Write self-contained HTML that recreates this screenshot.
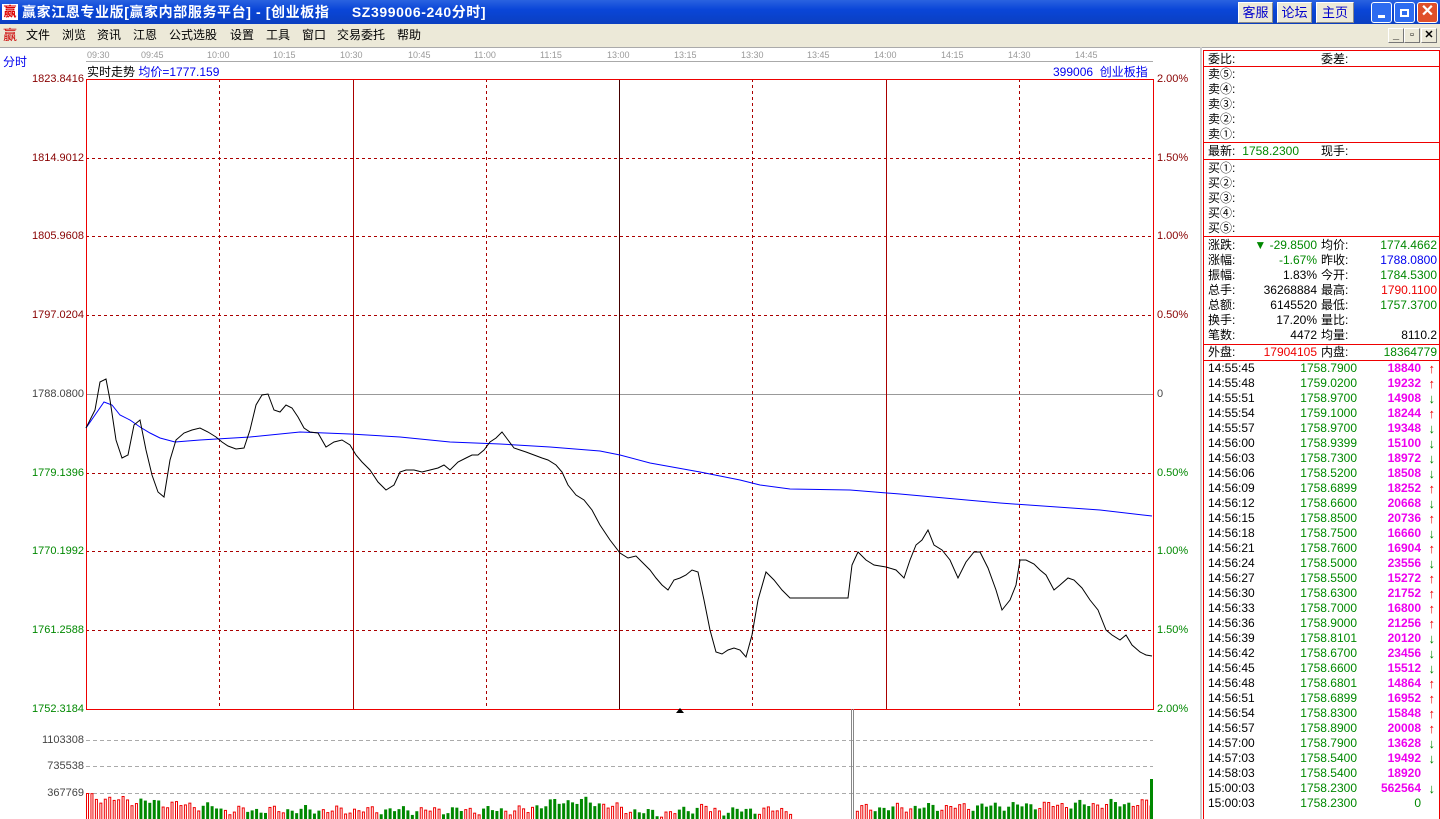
<!DOCTYPE html>
<html><head><meta charset="utf-8"><style>
*{margin:0;padding:0;box-sizing:border-box}
body{width:1440px;height:819px;overflow:hidden;background:#fff;font-family:"Liberation Sans","Noto Sans CJK SC",sans-serif;font-size:12px;position:relative}
.a{position:absolute;white-space:nowrap}
#title{left:0;top:0;width:1440px;height:24px;background:linear-gradient(#2a62e0,#0a46d8 40%,#0b3fc0);color:#fff;font-weight:bold;font-size:14px;line-height:24px}
.tb{top:2px;height:21px;background:#ece9d8;border:1px solid #fff;border-right-color:#888;border-bottom-color:#888;color:#00c;font-size:13px;line-height:19px;text-align:center}
.wb{top:2px;width:21px;height:21px;border:1px solid #fff;border-radius:3px;background:#2d6bf0}
#menu{left:0;top:24px;width:1440px;height:23px;background:#ece9d8;font-size:12px;line-height:23px}
#menu span{position:absolute}
.mb{top:28px;width:16px;height:15px;border:1px solid #fff;border-right-color:#777;border-bottom-color:#777;background:#ece9d8;font-size:11px;text-align:center;line-height:12px;font-weight:bold}
.tm{top:50px;font-size:9px;color:#999}
.pl{font-size:11px;right:1356px;text-align:right}
.pr{font-size:11px;left:1157px}
.rp div{position:absolute;white-space:nowrap;line-height:15px}
.r{text-align:right}
.g{color:#080}.rd{color:#e00}.b{color:#00e}.m{color:#e0e;font-weight:bold}
</style></head><body>
<div class="a" id="title"><span style="position:absolute;left:2px;top:4px;width:16px;height:16px;background:#fff;color:#d00;font-size:13px;line-height:16px;text-align:center">赢</span><span style="position:absolute;left:22px;letter-spacing:0.6px">赢家江恩专业版[赢家内部服务平台] - [创业板指&nbsp;&nbsp;&nbsp;&nbsp; SZ399006-240分时]</span></div>
<div class="a tb" style="left:1238px;width:35px">客服</div>
<div class="a tb" style="left:1277px;width:35px">论坛</div>
<div class="a tb" style="left:1316px;width:38px">主页</div>
<div class="a wb" style="left:1371px"><div style="position:absolute;left:6px;top:12px;width:7px;height:3px;background:#fff"></div></div>
<div class="a wb" style="left:1394px"><div style="position:absolute;left:5px;top:6px;width:9px;height:8px;border:2px solid #fff"></div></div>
<div class="a wb" style="left:1417px;background:#e0502a;color:#fff;font-weight:bold;font-size:16px;line-height:18px;text-align:center">✕</div>
<div class="a" id="menu"><span style="left:3px;color:#c00;font-size:14px">赢</span><span style="left:26px">文件</span><span style="left:62px">浏览</span><span style="left:97px">资讯</span><span style="left:133px">江恩</span><span style="left:169px">公式选股</span><span style="left:230px">设置</span><span style="left:266px">工具</span><span style="left:302px">窗口</span><span style="left:337px">交易委托</span><span style="left:397px">帮助</span></div>
<div class="a mb" style="left:1388px">_</div><div class="a mb" style="left:1404px">▫</div><div class="a mb" style="left:1421px">✕</div>
<div class="a" style="left:0;top:47px;width:1440px;height:1px;background:#aaa"></div>
<div class="a" style="left:1200px;top:47px;width:2px;height:772px;background:#ccc"></div>
<div class="a" style="left:3px;top:53px;color:#00e">分时</div>
<div class="a tm" style="left:87px">09:30</div><div class="a tm" style="left:141px">09:45</div><div class="a tm" style="left:207px">10:00</div><div class="a tm" style="left:273px">10:15</div><div class="a tm" style="left:340px">10:30</div><div class="a tm" style="left:408px">10:45</div><div class="a tm" style="left:474px">11:00</div><div class="a tm" style="left:540px">11:15</div><div class="a tm" style="left:607px">13:00</div><div class="a tm" style="left:674px">13:15</div><div class="a tm" style="left:741px">13:30</div><div class="a tm" style="left:807px">13:45</div><div class="a tm" style="left:874px">14:00</div><div class="a tm" style="left:941px">14:15</div><div class="a tm" style="left:1008px">14:30</div><div class="a tm" style="left:1075px">14:45</div>
<div class="a" style="left:86px;top:61px;width:1067px;height:1px;background:#aaa"></div>
<div class="a" style="left:87px;top:63px">实时走势 <span style="color:#00e">均价=1777.159</span></div>
<div class="a" style="left:1053px;top:63px;color:#00e">399006&nbsp; 创业板指</div>
<div class="a pl" style="top:73px;color:#800">1823.8416</div>
<div class="a pl" style="top:152px;color:#800">1814.9012</div>
<div class="a pl" style="top:230px;color:#800">1805.9608</div>
<div class="a pl" style="top:309px;color:#800">1797.0204</div>
<div class="a pl" style="top:388px;color:#444">1788.0800</div>
<div class="a pl" style="top:467px;color:#080">1779.1396</div>
<div class="a pl" style="top:545px;color:#080">1770.1992</div>
<div class="a pl" style="top:624px;color:#080">1761.2588</div>
<div class="a pl" style="top:703px;color:#080">1752.3184</div>
<div class="a pr" style="top:73px;color:#800">2.00%</div>
<div class="a pr" style="top:152px;color:#800">1.50%</div>
<div class="a pr" style="top:230px;color:#800">1.00%</div>
<div class="a pr" style="top:309px;color:#800">0.50%</div>
<div class="a pr" style="top:388px;color:#444">0</div>
<div class="a pr" style="top:467px;color:#080">0.50%</div>
<div class="a pr" style="top:545px;color:#080">1.00%</div>
<div class="a pr" style="top:624px;color:#080">1.50%</div>
<div class="a pr" style="top:703px;color:#080">2.00%</div>
<div class="a pl" style="top:734px;color:#444">1103308</div>
<div class="a pl" style="top:760px;color:#444">735538</div>
<div class="a pl" style="top:787px;color:#444">367769</div>
<svg class="a" style="left:0;top:0" width="1200" height="819" id="sv">
<g stroke="#a00" stroke-dasharray="3,3" fill="none">
<line x1="86" y1="158.5" x2="1153" y2="158.5"/><line x1="86" y1="236.5" x2="1153" y2="236.5"/><line x1="86" y1="315.5" x2="1153" y2="315.5"/><line x1="86" y1="473.5" x2="1153" y2="473.5"/><line x1="86" y1="551.5" x2="1153" y2="551.5"/><line x1="86" y1="630.5" x2="1153" y2="630.5"/>
<line x1="219.5" y1="79" x2="219.5" y2="709"/><line x1="486.5" y1="79" x2="486.5" y2="709"/><line x1="752.5" y1="79" x2="752.5" y2="709"/><line x1="1019.5" y1="79" x2="1019.5" y2="709"/>
</g>
<line x1="86" y1="394.5" x2="1153" y2="394.5" stroke="#999"/>
<line x1="353.5" y1="79" x2="353.5" y2="709" stroke="#a00"/>
<line x1="619.5" y1="79" x2="619.5" y2="709" stroke="#400"/>
<line x1="886.5" y1="79" x2="886.5" y2="709" stroke="#a00"/>
<rect x="86.5" y="79.5" width="1067" height="630" fill="none" stroke="#e00"/>
<g stroke="#aaa" stroke-dasharray="4,3"><line x1="86" y1="740.5" x2="1153" y2="740.5"/><line x1="86" y1="766.5" x2="1153" y2="766.5"/><line x1="86" y1="793.5" x2="1153" y2="793.5"/></g>
<polygon points="676,713 680,708 684,713" fill="#000"/>
<line x1="851.5" y1="709" x2="851.5" y2="819" stroke="#888"/><line x1="853.5" y1="709" x2="853.5" y2="819" stroke="#888"/>
<polyline fill="none" stroke="#00f" points="86,428 95,415 104,402 112,405 120,415 130,420 140,427 150,433 160,438 175,442 200,440 250,437 300,432 350,434 400,437 450,442 500,444 550,447 600,451 620,455 650,463 700,472 740,480 760,485 790,489 850,490 900,494 1000,503 1100,510 1152,516"/>
<polyline fill="none" stroke="#000" points="86,428 95,410 100,382 106,379 110,400 116,440 122,458 128,455 134,425 140,420 146,450 152,475 158,492 164,497 170,460 176,440 184,433 192,430 200,428 208,432 216,437 222,442 228,446 236,449 244,448 250,430 256,405 262,395 268,394 274,410 280,412 286,405 292,408 298,417 304,428 310,432 318,433 326,447 334,442 342,440 350,445 356,455 362,462 370,470 378,482 386,490 394,485 400,472 406,470 414,470 422,472 430,470 438,468 444,465 450,470 458,462 466,458 472,455 478,455 484,450 490,442 496,438 502,432 508,440 514,448 520,450 526,452 534,455 542,458 548,460 556,465 562,472 568,485 576,495 584,500 592,510 600,525 610,540 620,553 628,558 636,556 642,562 650,570 656,578 662,585 668,590 674,580 680,578 686,575 692,570 698,572 704,600 710,630 716,652 722,654 728,650 734,648 740,650 746,657 752,635 758,600 766,572 774,580 782,590 790,598 800,598 820,598 848,598 852,565 858,552 866,560 874,565 886,567 896,570 904,578 910,560 916,545 922,540 928,530 934,545 942,550 950,560 958,578 966,562 974,552 980,552 988,568 996,590 1002,610 1010,600 1016,585 1020,560 1026,560 1034,564 1040,570 1046,575 1054,590 1060,585 1068,578 1074,580 1082,588 1090,600 1098,610 1106,630 1112,635 1120,640 1126,635 1132,645 1140,652 1146,655 1152,656"/>
<g id="vb"></g>
</svg>
<script>
(function(){var g=document.getElementById('vb'),s='';
function hh(i){var base;if(i<30)base=22-i*0.35;else if(i<100)base=9;else if(i<140)base=12+6*Math.sin((i-100)/6);else base=8+(i-140)*0.08;return Math.max(2,base+3*Math.sin(i*1.7)+2*Math.cos(i*0.9));}
var n=0;for(var x=86;x<1151;x+=4.45,n++){if(x>792&&x<855)continue;var h=hh(n);if(n==0)h=26;var red=(n<12)||Math.sin(n*0.45+Math.cos(n*0.13)*2)>0.1;
if(red)s+='<rect x="'+(x+0.5)+'" y="'+(819-h+0.5)+'" width="2" height="'+h+'" fill="none" stroke="#e00"/>';else s+='<rect x="'+x+'" y="'+(819-h)+'" width="3" height="'+h+'" fill="#080"/>';}
s+='<rect x="1150" y="779" width="3" height="40" fill="#080"/>';g.innerHTML=s;})();
</script>
<div class="a rp" style="left:1203px;top:50px;width:237px;height:769px;border:1px solid #e00;border-bottom:none">
<div style="left:4px;top:1px">委比:</div><div style="left:117px;top:1px">委差:</div>
<div style="left:0;top:15px;width:236px;height:1px;background:#e00"></div>
<div style="left:4px;top:16px">卖⑤:<br>卖④:<br>卖③:<br>卖②:<br>卖①:</div>
<div style="left:0;top:91px;width:236px;height:1px;background:#e00"></div>
<div style="left:4px;top:93px">最新:</div><div class="g r" style="right:140px;top:93px">1758.2300</div><div style="left:117px;top:93px">现手:</div>
<div style="left:0;top:108px;width:236px;height:1px;background:#e00"></div>
<div style="left:4px;top:110px">买①:<br>买②:<br>买③:<br>买④:<br>买⑤:</div>
<div style="left:0;top:185px;width:236px;height:1px;background:#e00"></div>
<div style="left:4px;top:187px">涨跌:<br>涨幅:<br>振幅:<br>总手:<br>总额:<br>换手:<br>笔数:</div>
<div class="r" style="right:122px;top:187px;text-align:right"><span class="g">▼ -29.8500</span><br><span class="g">-1.67%</span><br>1.83%<br>36268884<br>6145520<br>17.20%<br>4472</div>
<div style="left:117px;top:187px">均价:<br>昨收:<br>今开:<br>最高:<br>最低:<br>量比:<br>均量:</div>
<div style="right:2px;top:187px;text-align:right"><span class="g">1774.4662</span><br><span class="b">1788.0800</span><br><span class="g">1784.5300</span><br><span class="rd">1790.1100</span><br><span class="g">1757.3700</span><br>&nbsp;<br>8110.2</div>
<div style="left:0;top:293px;width:236px;height:1px;background:#e00"></div>
<div style="left:4px;top:294px">外盘:</div><div class="rd" style="right:122px;top:294px">17904105</div><div style="left:117px;top:294px">内盘:</div><div class="g" style="right:2px;top:294px">18364779</div>
<div style="left:0;top:309px;width:236px;height:1px;background:#e00"></div>
<div style="left:4px;top:310px">14:55:45<br>14:55:48<br>14:55:51<br>14:55:54<br>14:55:57<br>14:56:00<br>14:56:03<br>14:56:06<br>14:56:09<br>14:56:12<br>14:56:15<br>14:56:18<br>14:56:21<br>14:56:24<br>14:56:27<br>14:56:30<br>14:56:33<br>14:56:36<br>14:56:39<br>14:56:42<br>14:56:45<br>14:56:48<br>14:56:51<br>14:56:54<br>14:56:57<br>14:57:00<br>14:57:03<br>14:58:03<br>15:00:03<br>15:00:03</div>
<div class="g" style="right:82px;top:310px;text-align:right">1758.7900<br>1759.0200<br>1758.9700<br>1759.1000<br>1758.9700<br>1758.9399<br>1758.7300<br>1758.5200<br>1758.6899<br>1758.6600<br>1758.8500<br>1758.7500<br>1758.7600<br>1758.5000<br>1758.5500<br>1758.6300<br>1758.7000<br>1758.9000<br>1758.8101<br>1758.6700<br>1758.6600<br>1758.6801<br>1758.6899<br>1758.8300<br>1758.8900<br>1758.7900<br>1758.5400<br>1758.5400<br>1758.2300<br>1758.2300</div>
<div class="m" style="right:18px;top:310px;text-align:right">18840<br>19232<br>14908<br>18244<br>19348<br>15100<br>18972<br>18508<br>18252<br>20668<br>20736<br>16660<br>16904<br>23556<br>15272<br>21752<br>16800<br>21256<br>20120<br>23456<br>15512<br>14864<br>16952<br>15848<br>20008<br>13628<br>19492<br>18920<br>562564<br><span style="color:#080;font-weight:normal">0</span></div>
<div style="right:4px;top:310px;font-weight:bold;font-size:13px"><span class="rd">↑</span><br><span class="rd">↑</span><br><span class="g">↓</span><br><span class="rd">↑</span><br><span class="g">↓</span><br><span class="g">↓</span><br><span class="g">↓</span><br><span class="g">↓</span><br><span class="rd">↑</span><br><span class="g">↓</span><br><span class="rd">↑</span><br><span class="g">↓</span><br><span class="rd">↑</span><br><span class="g">↓</span><br><span class="rd">↑</span><br><span class="rd">↑</span><br><span class="rd">↑</span><br><span class="rd">↑</span><br><span class="g">↓</span><br><span class="g">↓</span><br><span class="g">↓</span><br><span class="rd">↑</span><br><span class="rd">↑</span><br><span class="rd">↑</span><br><span class="rd">↑</span><br><span class="g">↓</span><br><span class="g">↓</span><br>&nbsp;<br><span class="g">↓</span></div>
</div>
</body></html>
